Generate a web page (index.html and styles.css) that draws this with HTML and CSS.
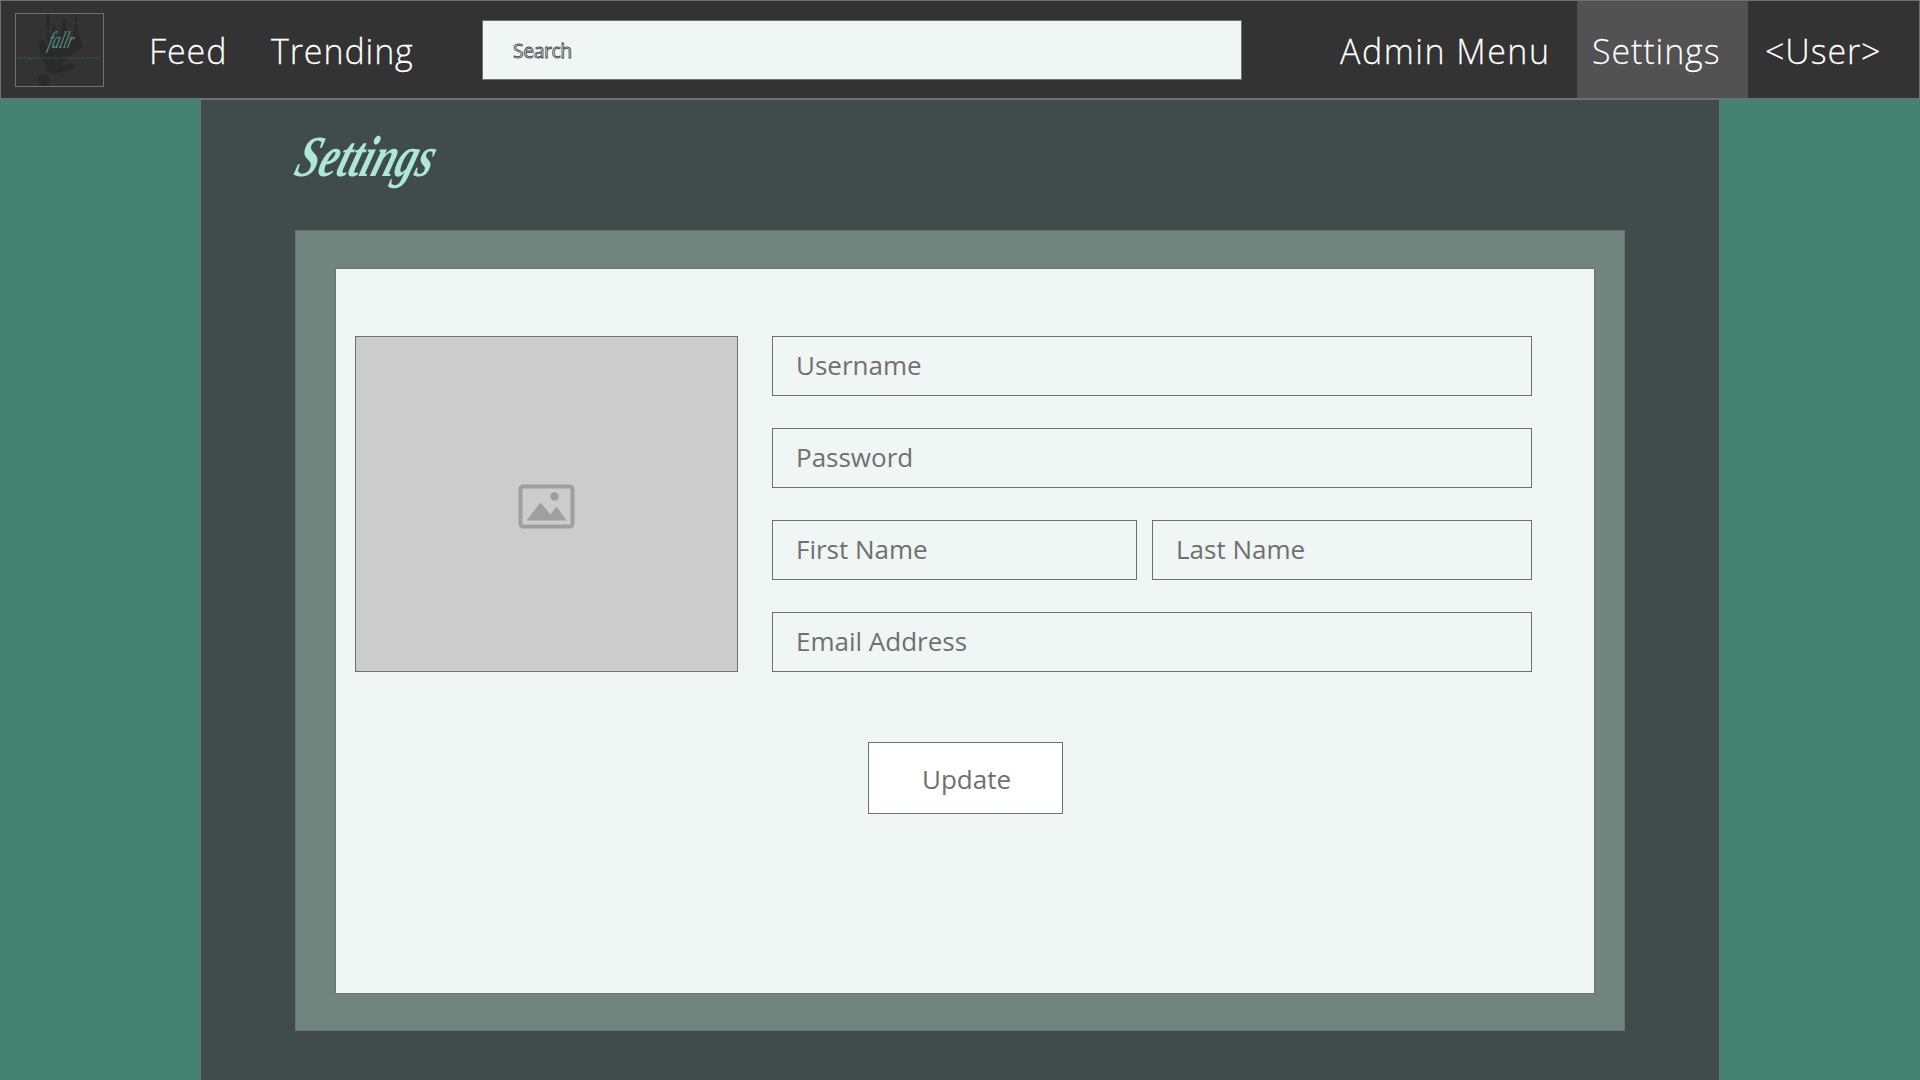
FILE: index.html
```html
<!DOCTYPE html>
<html lang="en">
<head>
<meta charset="utf-8">
<title>Settings</title>
<link rel="stylesheet" href="styles.css">
</head>
<body>
<header class="topbar">
  <a class="logo">
    <svg width="87" height="72" viewBox="0 0 87 72">
      <g fill="none" stroke="#2a2a2a" stroke-width="3" stroke-linecap="round">
        <path d="M32 0v14M32 20v6M38 12v5M48 5v12M60 0v6M60 11v6"/>
      </g>
      <g fill="none" stroke="#2a2a2a" stroke-linecap="round" stroke-linejoin="round">
        <path stroke-width="6" d="M48 15v14M60 19l3 13l-12 8M26 28l2 16"/>
        <path stroke-width="6" d="M36 57l19-4"/>
      </g>
      <path fill="#2a2a2a" stroke="#2a2a2a" stroke-width="3" stroke-linejoin="round" d="M31 33L46 20L52 30L61 22L64 33L47 46L40 56L33 57L28 45z"/>
      <circle cx="28" cy="66" r="6" fill="#2a2a2a"/>
      <text class="logo-name" transform="translate(31 34) skewX(-16)" textLength="25" lengthAdjust="spacingAndGlyphs">fallr</text>
      <text class="logo-tag" x="2" y="45" textLength="83" lengthAdjust="spacingAndGlyphs">A blogging website for falling into deep holes</text>
    </svg>
  </a>
  <nav class="nav">
    <a class="feed">Feed</a>
    <a class="trending">Trending</a>
  </nav>
  <div class="search">Search</div>
  <nav class="nav nav-right">
    <a class="admin">Admin Menu</a>
    <a class="settings">Settings</a>
    <a class="user">&lt;User&gt;</a>
  </nav>
</header>
<main class="page">
  <h1 class="title">Settings</h1>
  <section class="panel">
    <form class="card">
      <div class="profile">
        <div class="photo">
          <svg width="57" height="45" viewBox="0 0 57 45">
            <rect x="2.500" y="2.500" width="52" height="40" rx="2.500" fill="none" stroke="#9f9f9f" stroke-width="4"/>
            <circle cx="36.500" cy="12.500" r="4.200" fill="#9f9f9f"/>
            <path fill="#9f9f9f" d="M8.500 36.500L22.500 18.500L32.500 30.500L38.500 22.500L48.500 36.500z"/>
          </svg>
        </div>
        <div class="fields">
          <div class="field">Username</div>
          <div class="field">Password</div>
          <div class="row">
            <div class="field first">First Name</div>
            <div class="field last">Last Name</div>
          </div>
          <div class="field">Email Address</div>
        </div>
      </div>
      <div class="update">Update</div>
    </form>
  </section>
</main>
</body>
</html>
```
FILE: styles.css
```css
* { box-sizing: border-box; }
body {
  margin: 0;
  height: 1080px;
  overflow: hidden;
  background: #448272;
  font-family: "Open Sans", "Noto Sans", sans-serif;
}
.topbar {
  display: flex;
  align-items: center;
  height: 99px;
  border: 1px solid #707070;
  background: #333;
}
.logo {
  width: 89px;
  height: 74px;
  margin-left: 14px;
  border: 1px solid #707070;
}
.logo svg { display: block; }
.logo-name {
  font: italic 24px "Liberation Serif", serif;
  fill: #55917f;
}
.logo-tag {
  font-size: 4px;
  fill: #2c6555;
}
.nav {
  display: flex;
  height: 97px;
  color: #fff;
  font-size: 34px;
  font-weight: 300;
  line-height: 100px;
  letter-spacing: .9px;
  white-space: nowrap;
  text-shadow: 0 0 1px #000;
  -webkit-text-stroke: .3px #fff;
}
.feed { width: 122px; margin-left: 45px; }
.trending { width: 211px; }
.search {
  width: 760px;
  height: 60px;
  padding-left: 30px;
  border: 1px solid #707070;
  background: #f0f6f4;
  color: #e4eae8;
  -webkit-text-stroke: .8px #444;
  font-size: 19.500px;
  letter-spacing: -.5px;
  line-height: 60px;
}
.nav-right { margin-left: auto; }
.admin { width: 237px; letter-spacing: 1.500px; }
.settings {
  width: 171px;
  padding-left: 15px;
  background: #525252;
}
.user { width: 171px; padding-left: 17px; }
.page {
  width: 1520px;
  height: 981px;
  margin: 0 auto;
  padding: 0 94px;
  border: 1px solid #707070;
  border-bottom: 0;
  background: #3f4c49;
}
.title {
  width: 178px;
  height: 130px;
  margin: 0 0 0 -3px;
  padding-top: 21px;
  color: #aee6d9;
  font: italic bold 58px/72px "Liberation Serif", serif;
  transform: skewX(-18deg) scaleX(.72);
  transform-origin: 0 77px;
}
.panel {
  width: 1330px;
  height: 801px;
  padding: 37px 39px;
  border: 1px solid #707070;
  background: #70857e;
}
.card {
  width: 1260px;
  height: 726px;
  padding: 67px 19px;
  border: 1px solid #707070;
  background: #f0f6f4;
  color: #707070;
  font-size: 26px;
}
.profile { display: flex; gap: 34px; }
.photo {
  display: flex;
  align-items: center;
  justify-content: center;
  width: 383px;
  height: 336px;
  padding-top: 4px;
  border: 1px solid #707070;
  background: #ccc;
}
.fields {
  display: flex;
  flex-direction: column;
  gap: 32px;
  width: 760px;
}
.row { display: flex; gap: 15px; }
.field {
  height: 60px;
  padding-left: 23px;
  border: 1px solid #707070;
  line-height: 56px;
}
.first { width: 365px; }
.last { width: 380px; }
.update {
  width: 195px;
  height: 72px;
  margin: 70px 0 0 513px;
  padding-left: 53px;
  border: 1px solid #707070;
  background: #fff;
  line-height: 72px;
}
```
